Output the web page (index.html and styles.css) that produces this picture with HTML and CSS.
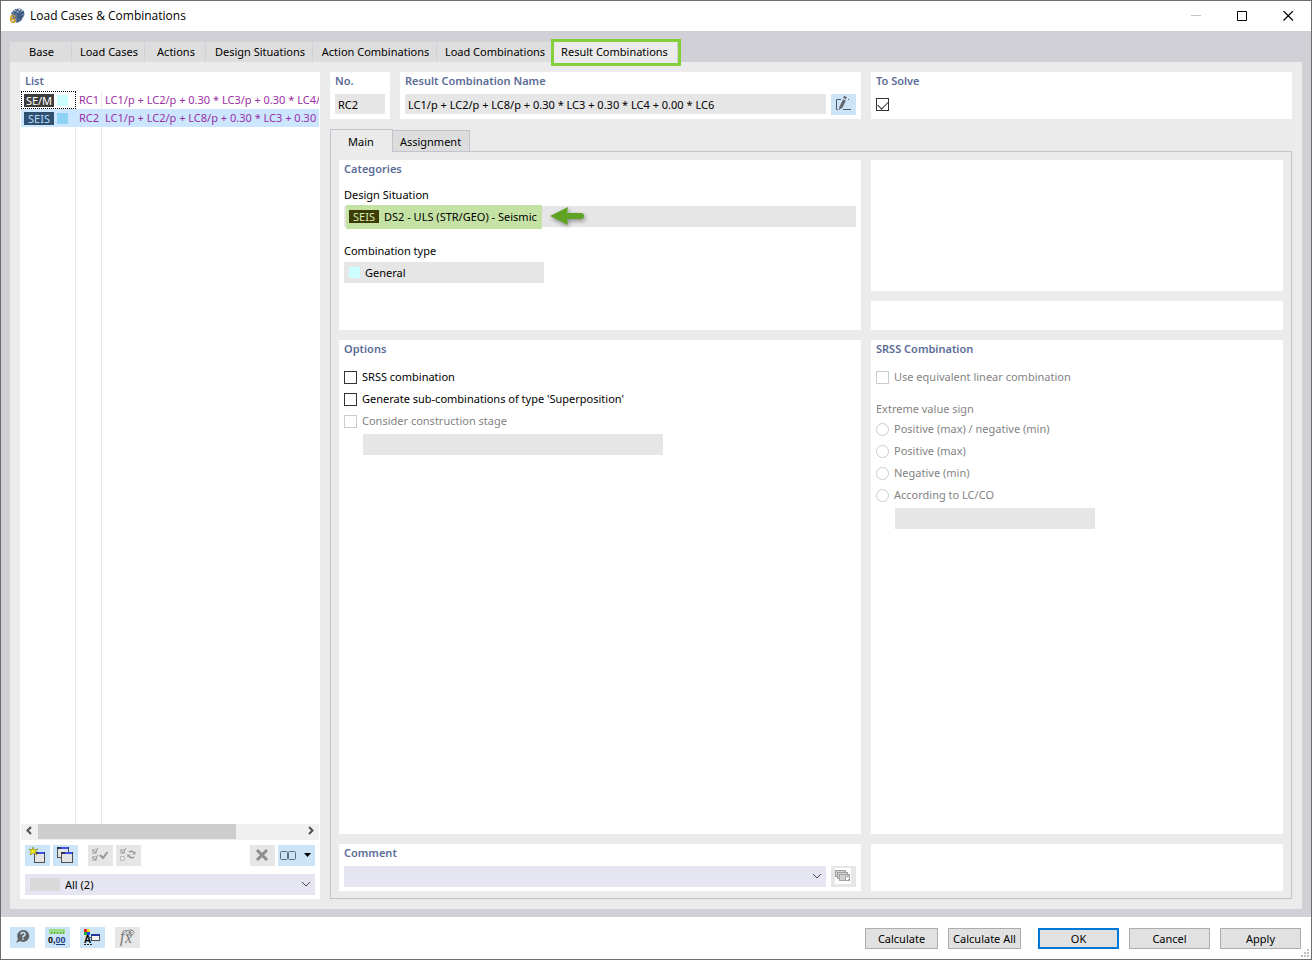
FILE: index.html
```html
<!DOCTYPE html>
<html lang="en">

<head>
   <meta charset="UTF-8">
   <meta name="viewport" content="width=device-width, initial-scale=1.0">
   <title>Load Cases &amp; Combinations</title>
   <link rel="stylesheet" href="styles.css">
</head>

<body>
   <header class="titlebar">
      <svg class="app-icon" width="16" height="16" viewBox="0 0 16 16">
         <path d="M2 5 L6 1 L11 0.500 L15 3 L15.500 7 L12 13 L8 15 L5 12 Z" fill="#5d7699"/>
         <path d="M3 4 L6 1 L11 1 L14 3 L9 5 Z" fill="#b4c5dc"/>
         <path d="M4 3 L12 7 M6 1.500 L14 5 M9 1 L5 6 M12 1.500 L9 6 L9 14 M15 4 L11 7 L12 12 M9 10 L14 8" stroke="#314a70" fill="none"/>
         <text class="app-digit" x="1" y="15">6</text>
      </svg>
      <h1>Load Cases &amp; Combinations</h1>
      <div class="win-buttons">
         <button type="button" aria-label="Minimize" disabled><svg width="11" height="11"><path d="M0 4.500 H10" stroke="#c4c4c4"/></svg></button>
         <button type="button" aria-label="Maximize"><svg width="11" height="11"><path d="M0.500 0.500 H9.500 V9.500 H0.500 Z" fill="none" stroke="#000"/></svg></button>
         <button type="button" aria-label="Close"><svg width="11" height="11"><path d="M0.500 0 L10 9.500 M10 0 L0.500 9.500" stroke="#000" stroke-width="1.200"/></svg></button>
      </div>
   </header>

   <main class="frame">
      <nav class="tabs">
         <button type="button" class="tab w-base">Base</button>
         <button type="button" class="tab w-cases">Load Cases</button>
         <button type="button" class="tab w-actions">Actions</button>
         <button type="button" class="tab w-situations">Design Situations</button>
         <button type="button" class="tab w-action-co">Action Combinations</button>
         <button type="button" class="tab w-load-co">Load Combinations</button>
         <button type="button" class="tab w-result-co active">Result Combinations</button>
      </nav>

      <div class="page">
         <section class="card list">
            <h2>List</h2>
            <div class="list-body">
               <table>
                  <tr>
                     <td class="kind focus"><span class="badge">SE/M</span><i class="color"></i></td>
                     <td class="no">RC1</td>
                     <td class="name">LC1/p + LC2/p + 0.30 * LC3/p + 0.30 * LC4/p</td>
                  </tr>
                  <tr class="selected">
                     <td class="kind"><span class="badge">SEIS</span><i class="color"></i></td>
                     <td class="no">RC2</td>
                     <td class="name">LC1/p + LC2/p + LC8/p + 0.30 * LC3 + 0.30 * LC4</td>
                  </tr>
                  <tr class="rest"><td></td><td></td><td></td></tr>
               </table>
            </div>
            <div class="scrollbar">
               <svg width="17" height="15"><path d="M10 3 L6.500 6.500 L10 10" fill="none" stroke="#505050" stroke-width="2"/></svg>
               <div class="track"><div class="thumb"></div></div>
               <svg width="17" height="15"><path d="M7 3 L10.500 6.500 L7 10" fill="none" stroke="#505050" stroke-width="2"/></svg>
            </div>
            <div class="toolbar">
               <button type="button" class="tool" aria-label="New">
                  <svg width="25" height="21">
                     <rect x="9.500" y="7.500" width="10" height="10" fill="#e4e4e4" stroke="#505050"/>
                     <path d="M9 8 H20" stroke="#303050" stroke-width="2"/>
                     <path d="M13 8 H19" stroke="#4050f0" stroke-width="2"/>
                     <path d="M8 2 L9 5 L13 4 L10 6.500 L12 10 L8.500 8 L5 10 L6 7 L4 4 L7 5 Z" fill="#ffee10" stroke="#85852a" stroke-width="0.700"/>
                  </svg>
               </button>
               <button type="button" class="tool" aria-label="Copy">
                  <svg width="25" height="21">
                     <rect x="4.500" y="2.500" width="11" height="10" fill="#e4e4e4" stroke="#505050"/>
                     <path d="M4 3 H16" stroke="#303050" stroke-width="2"/>
                     <path d="M8 3 H15" stroke="#4050f0" stroke-width="2"/>
                     <rect x="8.500" y="7.500" width="11" height="10" fill="#e4e4e4" stroke="#505050"/>
                     <path d="M8 8 H20" stroke="#303050" stroke-width="2"/>
                     <path d="M12 8 H19" stroke="#4050f0" stroke-width="2"/>
                  </svg>
               </button>
               <button type="button" class="tool off push" aria-label="Select all" disabled>
                  <svg width="25" height="21" fill="none" stroke="#959595">
                     <path d="M4.500 4.500 H8.500 V8.500 H4.500 Z M4.500 11.500 H8.500 V15.500 H4.500 Z" stroke="#bcbcbc"/>
                     <path d="M5 5 L7 8 L10 3 M5 12 L7 15 L10 10"/>
                     <path d="M12 10 L15 13 L19.500 7" stroke-width="2"/>
                  </svg>
               </button>
               <button type="button" class="tool off" aria-label="Invert selection" disabled>
                  <svg width="25" height="21" fill="none" stroke="#959595">
                     <path d="M4.500 4.500 H8.500 V8.500 H4.500 Z M4.500 11.500 H8.500 V15.500 H4.500 Z" stroke="#bcbcbc"/>
                     <path d="M5 5 L7 8 L10 3"/>
                     <path d="M13 7 Q16 5 18 8 M18 12 Q15 14 13 11" stroke-width="1.500"/>
                     <path d="M19.500 6 V9.500 H16 Z M11 9.500 H15 L11.500 12.500 Z" fill="#a0a0a0" stroke="none"/>
                  </svg>
               </button>
               <button type="button" class="tool off right" aria-label="Delete" disabled>
                  <svg width="25" height="21"><path d="M7 5 L17 15 M17 5 L7 15" stroke="#8e8e8e" stroke-width="3"/></svg>
               </button>
               <button type="button" class="tool wide" aria-label="View">
                  <svg width="37" height="21" fill="none" stroke="#5d7083">
                     <rect x="2.500" y="6.500" width="7" height="8" rx="1"/>
                     <rect x="10.500" y="6.500" width="7" height="8" rx="1"/>
                     <path d="M26 8 H33 L29.500 12 Z" fill="#000" stroke="none"/>
                  </svg>
               </button>
            </div>
            <div class="combo filter">
               <i class="swatch"></i>
               <select aria-label="Filter"><option>All (2)</option></select>
               <svg class="chevron" width="11" height="7"><path d="M1 1 L5 5 L9 1" fill="none" stroke="#444"/></svg>
            </div>
         </section>

         <div class="details">
            <div class="head">
               <section class="card">
                  <h2><label for="no">No.</label></h2>
                  <input class="field" id="no" value="RC2" readonly>
               </section>
               <section class="card">
                  <h2><label for="name">Result Combination Name</label></h2>
                  <div class="line">
                     <input class="field" id="name" value="LC1/p + LC2/p + LC8/p + 0.30 * LC3 + 0.30 * LC4 + 0.00 * LC6" readonly>
                     <button type="button" class="tool" aria-label="Edit name">
                        <svg width="25" height="21">
                           <path d="M10 5.500 H5.500 V15.500 H7 M17 5.500 H18 M12 15.500 H20" fill="none" stroke="#556"/>
                           <path d="M10 13 L13.500 6" stroke="#606468" stroke-width="3"/>
                           <path d="M13.500 4.500 L14.500 2.500" stroke="#606468" stroke-width="3"/>
                           <path d="M8 16 L8.500 12 L11.500 13.500 Z" fill="#606468"/>
                        </svg>
                     </button>
                  </div>
               </section>
               <section class="card">
                  <h2><label for="solve">To Solve</label></h2>
                  <input type="checkbox" id="solve" class="solve" checked>
               </section>
            </div>

            <nav class="subtabs">
               <button type="button" class="subtab active">Main</button>
               <button type="button" class="subtab">Assignment</button>
            </nav>

            <div class="sheet">
               <section class="card categories">
                  <h2>Categories</h2>
                  <label class="caption" for="situation">Design Situation</label>
                  <div class="combo-field">
                     <div class="marked">
                        <span class="badge">SEIS</span>
                        <input id="situation" value="DS2 - ULS (STR/GEO) - Seismic" readonly>
                     </div>
                     <svg class="arrow" width="40" height="24" viewBox="0 0 40 24">
                        <path d="M2 11 L20 2 L19 8 H33 A3 3 0 0 1 33 14 H19 L20 20 Z" fill="#5fa325"/>
                     </svg>
                  </div>
                  <label class="caption" for="cotype">Combination type</label>
                  <div class="combo-field short">
                     <i class="color"></i>
                     <input id="cotype" value="General" readonly>
                  </div>
               </section>
               <div class="side">
                  <section class="card"></section>
                  <section class="card"></section>
               </div>

               <section class="card options">
                  <h2>Options</h2>
                  <label class="check"><input type="checkbox">SRSS combination</label>
                  <label class="check"><input type="checkbox">Generate sub-combinations of type 'Superposition'</label>
                  <label class="check"><input type="checkbox" disabled>Consider construction stage</label>
                  <input class="field indent stage" aria-label="Construction stage" disabled>
               </section>
               <section class="card options">
                  <h2>SRSS Combination</h2>
                  <label class="check"><input type="checkbox" disabled>Use equivalent linear combination</label>
                  <p class="caption muted">Extreme value sign</p>
                  <label class="check"><input type="radio" name="sign" disabled>Positive (max) / negative (min)</label>
                  <label class="check"><input type="radio" name="sign" disabled>Positive (max)</label>
                  <label class="check"><input type="radio" name="sign" disabled>Negative (min)</label>
                  <label class="check"><input type="radio" name="sign" disabled>According to LC/CO</label>
                  <input class="field indent according" aria-label="LC/CO" disabled>
               </section>

               <section class="card">
                  <h2><label for="comment">Comment</label></h2>
                  <div class="line">
                     <div class="combo">
                        <select id="comment"><option></option></select>
                        <svg class="chevron" width="11" height="7"><path d="M1 1 L5 5 L9 1" fill="none" stroke="#444"/></svg>
                     </div>
                     <button type="button" class="tool off" aria-label="Comment library" disabled>
                        <svg width="25" height="21">
                           <rect x="4" y="2" width="16" height="16" fill="#fff"/>
                           <g fill="#d0d0d0" stroke="#a0a0a0">
                              <rect x="4.500" y="4.500" width="10" height="6"/>
                              <rect x="6.500" y="6.500" width="10" height="6"/>
                              <rect x="8.500" y="8.500" width="10" height="6"/>
                              <path d="M14.500 10.500 H18.500 V12.500 L16.500 14.500 H14.500 Z" fill="#fff"/>
                           </g>
                        </svg>
                     </button>
                  </div>
               </section>
               <section class="card"></section>
            </div>
         </div>
      </div>
   </main>

   <footer class="footer">
      <button type="button" class="tool" aria-label="Help">
         <svg width="25" height="21">
            <path d="M13 3 A6 6 0 1 1 10 14 L6 16 L8 12 A6 6 0 0 1 13 3 Z" fill="#606468"/>
            <path d="M11 7.500 Q11 5.500 13 5.500 Q15 5.500 15 7.500 Q15 8.500 13 9.500 V10.500 M13 11.500 V13" fill="none" stroke="#cbe4f8" stroke-width="1.500"/>
         </svg>
      </button>
      <button type="button" class="tool" aria-label="Units and decimal places">
         <svg width="25" height="21">
            <rect x="4" y="2" width="16" height="5" fill="#9add83"/>
            <path d="M6.500 5 V7 M9.500 5 V7 M12.500 5 V7 M15.500 5 V7 M18.500 5 V7" stroke="#64a450"/>
            <text class="digits" x="3" y="16">0,<tspan fill="#1b3c80">00</tspan></text>
            <path d="M11 17.500 H20" stroke="#1b3c80"/>
         </svg>
      </button>
      <button type="button" class="tool" aria-label="Display properties">
         <svg width="25" height="21">
            <rect x="4" y="2" width="3" height="3" fill="#f02020"/>
            <rect x="7" y="2" width="3" height="3" fill="#f0e020"/>
            <rect x="4" y="5" width="3" height="3" fill="#20b030"/>
            <rect x="7" y="5" width="3" height="3" fill="#2040f0"/>
            <text class="letter" x="4" y="16">A</text>
            <path d="M4 17.500 H12" stroke="#222" stroke-dasharray="2 1"/>
            <rect x="11.500" y="7.500" width="8" height="6" fill="#f4f4f4" stroke="#505050"/>
            <path d="M11 8 H20" stroke="#2636a0" stroke-width="2"/>
            <path d="M8 10.500 H11" stroke="#505050"/>
         </svg>
      </button>
      <button type="button" class="tool off" aria-label="Formula" disabled>
         <svg width="25" height="21">
            <text class="formula" x="5" y="15">f</text>
            <text class="formula" x="10" y="16">x</text>
            <ellipse cx="15" cy="5.500" rx="4" ry="2.500" fill="none" stroke="#858585"/>
            <circle cx="15" cy="5.500" r="1.500" fill="#858585"/>
         </svg>
      </button>
      <div class="actions">
         <button type="button" class="btn small">Calculate</button>
         <button type="button" class="btn small">Calculate All</button>
         <button type="button" class="btn ok">OK</button>
         <button type="button" class="btn">Cancel</button>
         <button type="button" class="btn">Apply</button>
      </div>
      <svg class="grip" width="8" height="8" fill="#bfbfbf">
         <path d="M6 0 H8 V2 H6 Z M3 3 H5 V5 H3 Z M6 3 H8 V5 H6 Z M0 6 H2 V8 H0 Z M3 6 H5 V8 H3 Z M6 6 H8 V8 H6 Z"/>
      </svg>
   </footer>
</body>

</html>
```
FILE: styles.css
```css
* {
   box-sizing: border-box;
}

body {
   margin: 0;
   min-height: 100vh;
   display: flex;
   flex-direction: column;
   border: 1px solid #6d6d6f;
   background: #fff;
   font-family: 'Noto Sans', 'Open Sans', sans-serif;
   font-size: 11px;
   line-height: 16px;
   color: #000;
}

button,
input,
select {
   font: inherit;
   color: inherit;
   margin: 0;
   padding: 0;
   border: 0;
   border-radius: 0;
   background: none;
}

svg {
   display: block;
   flex: none;
}

h1,
h2,
p {
   margin: 0;
   font-size: inherit;
}

/* title bar */
.titlebar {
   height: 30px;
   display: flex;
   align-items: center;
   padding-left: 8px;
}

.titlebar h1 {
   margin-left: 5px;
   font-family: 'Open Sans', sans-serif;
   font-size: 12px;
   font-weight: normal;
}

.app-digit {
   font: bold 11px 'Liberation Sans', sans-serif;
   fill: #e0b01c;
   stroke: #7d621c;
   stroke-width: 0.3px;
}

.win-buttons {
   display: flex;
   margin-left: auto;
}

.win-buttons button {
   width: 46px;
   height: 30px;
   display: flex;
   align-items: center;
   justify-content: center;
}

/* main tabs */
.frame {
   flex: 1;
   display: flex;
   flex-direction: column;
   padding: 11px 9px 8px;
   background: #d1d0d6;
}

.tabs {
   display: flex;
}

.tab {
   height: 20px;
   padding-left: 2px;
   border-right: 1px solid #d1d0d6;
   background: #dddddd;
   text-align: center;
   white-space: nowrap;
}

.w-base { width: 62px; }
.w-cases { width: 73px; }
.w-actions { width: 61px; }
.w-situations { width: 107px; }
.w-action-co { width: 124px; }
.w-load-co { width: 115px; }
.w-result-co { width: 126px; }

.tab.active {
   position: relative;
   padding-left: 0;
   background: #ebebeb;
}

.tab.active::after {
   content: '';
   position: absolute;
   inset: -3px -4px -4px -1px;
   border: 3px solid #82cf3a;
}

.page {
   flex: 1;
   display: flex;
   gap: 10px;
   padding: 10px;
   background: #ebebeb;
}

.card {
   padding: 0 5px 5px;
   background: #fff;
   min-width: 0;
}

.card h2 {
   color: #5b6c96;
   font-weight: 600;
   line-height: 18px;
}

/* list */
.list {
   width: 300px;
   display: flex;
   flex-direction: column;
   padding-bottom: 4px;
}

.list-body {
   flex: 1;
   display: flex;
   margin: 1px -4px 0;
   overflow: hidden;
}

.list table {
   width: 100%;
   table-layout: fixed;
   border-collapse: separate;
   border-spacing: 0;
}

.list td {
   height: 18px;
   padding: 0 3px;
   line-height: 18px;
   white-space: nowrap;
   overflow: hidden;
   border-right: 1px solid #e8e8e8;
   color: #9b30a5;
}

.list td:first-child {
   width: 55px;
}

.list td:nth-child(2) {
   width: 26px;
}

.list td:last-child {
   border-right: 0;
}

.list .rest td {
   height: auto;
}

.list .selected td {
   background: #cce6ff;
   border-color: #cce6ff;
}

.list .focus {
   outline: 1px dotted #000;
   outline-offset: -1px;
}

.list .kind {
   line-height: 0;
}

.badge {
   display: inline-block;
   width: 30px;
   height: 13px;
   line-height: 13px;
   background: #3c3c3c;
   color: #fff;
   text-align: center;
   vertical-align: middle;
}

.selected .badge {
   background: #305070;
   color: #b5dcff;
}

.color {
   display: inline-block;
   width: 11px;
   height: 11px;
   margin-left: 3px;
   background: #ccffff;
   vertical-align: middle;
}

.selected .color {
   background: #8fd3f4;
}

.scrollbar {
   display: flex;
   height: 16px;
   margin: 0 -4px;
   background: #f0f0f0;
}

.track {
   flex: 1;
   padding-bottom: 1px;
}

.thumb {
   width: 75%;
   height: 100%;
   background: #cdcdcd;
}

.toolbar {
   display: flex;
   gap: 3px;
   margin: 5px 0 8px;
}

.tool {
   width: 25px;
   height: 21px;
   flex: none;
   background: #cbe4f8;
}

.tool.off {
   background: #e6e6e6;
}

.tool.push {
   margin-left: 7px;
}

.tool.right {
   margin-left: auto;
}

.tool.wide {
   width: 37px;
}

.combo {
   position: relative;
   flex: 1;
   display: flex;
   height: 21px;
   background: #e6e6f2;
}

.combo.filter {
   flex: none;
   align-items: center;
}

.combo select {
   flex: 1;
   height: 21px;
   appearance: none;
}

.chevron {
   position: absolute;
   right: 3px;
   top: 7px;
   pointer-events: none;
}

.swatch {
   width: 30px;
   height: 13px;
   margin: 0 5px;
   background: #d9d9d9;
}

/* right side */
.details {
   flex: 1;
   min-width: 0;
   display: flex;
   flex-direction: column;
}

.head {
   display: grid;
   grid-template-columns: 60px 461fr 421fr;
   gap: 10px;
}

.field {
   width: 100%;
   height: 21px;
   padding: 0 3px;
   background: #e6e6e6;
}

.head .card {
   height: 47px;
}

.head .field {
   height: 20px;
}

.card h2 + .field,
.line {
   margin-top: 4px;
}

.line {
   display: flex;
   gap: 5px;
}

input[type=checkbox],
input[type=radio] {
   appearance: none;
   width: 13px;
   height: 13px;
   flex: none;
   border: 1px solid #333;
   background: #fff;
}

input[type=radio] {
   border-radius: 50%;
}

input:disabled {
   border-color: #cccccc;
}

.solve {
   display: block;
   margin-top: 8px;
}

.solve:checked::after {
   content: '';
   display: block;
   width: 9px;
   height: 5px;
   margin: 2px 1px;
   border: solid #333;
   border-width: 0 0 1px 1px;
   transform: rotate(-45deg);
}

.subtabs {
   display: flex;
   align-items: flex-end;
   margin-top: 10px;
}

.subtab {
   height: 21px;
   width: 77px;
   padding: 1px 1px 0 0;
   border: 1px solid #c3c3ce;
   border-width: 1px 1px 0 0;
   background: #dddddd;
}

.subtab.active {
   position: relative;
   height: 23px;
   width: 63px;
   margin-bottom: -1px;
   border-left-width: 1px;
   background: #ebebeb;
}

.sheet {
   flex: 1;
   display: grid;
   grid-template-columns: 522fr 412fr;
   grid-template-rows: 170px 1fr 47px;
   gap: 10px;
   padding: 8px 8px 7px;
   border: 1px solid #c3c3ce;
}

.side {
   display: grid;
   grid-template-rows: 1fr 29px;
   gap: 10px;
}

.caption {
   display: block;
   margin-top: 9px;
}

.combo-field {
   display: flex;
   align-items: center;
   height: 21px;
   margin: 3px 0 16px;
   background: #e6e6e6;
}

.combo-field input {
   flex: 1;
   min-width: 0;
   padding-left: 5px;
}

.combo-field.short {
   width: 200px;
   padding-left: 2px;
}

.marked {
   display: flex;
   align-items: center;
   width: 196px;
   height: 24px;
   margin-left: 2px;
   padding-left: 3px;
   background: #c5e2a5;
}

.marked .badge {
   background: #3d3b05;
   color: #d5eeb5;
}

.arrow {
   margin-left: 6px;
   filter: drop-shadow(1px 2px 2px rgba(0, 0, 0, 0.4));
}

.options h2 {
   margin-bottom: 8px;
}

.check {
   display: flex;
   align-items: center;
   gap: 5px;
   height: 22px;
}

.check:has(:disabled),
.muted {
   color: #838383;
}

.muted {
   margin: 13px 0 1px;
}

.indent {
   display: block;
   margin: 2px 0 0 19px;
}

.stage {
   width: 300px;
}

.according {
   width: 200px;
}

/* footer */
.footer {
   position: relative;
   display: flex;
   gap: 10px;
   height: 42px;
   padding: 10px 10px 0 9px;
}

.actions {
   display: flex;
   gap: 10px;
   margin: 1px 0 0 auto;
}

.btn {
   width: 81px;
   height: 21px;
   border: 1px solid #adadad;
   background: #e1e1e1;
   white-space: nowrap;
}

.btn.small {
   width: 73px;
}

.btn.ok {
   margin-left: 7px;
   border: 2px solid #0078d7;
}

.grip {
   position: absolute;
   right: 2px;
   bottom: 2px;
}

.digits {
   font: bold 9px 'Liberation Sans', sans-serif;
}

.letter {
   font: bold 10px 'Liberation Sans', sans-serif;
}

.formula {
   font: italic 16px 'Liberation Serif', serif;
   fill: #777;
}
```
